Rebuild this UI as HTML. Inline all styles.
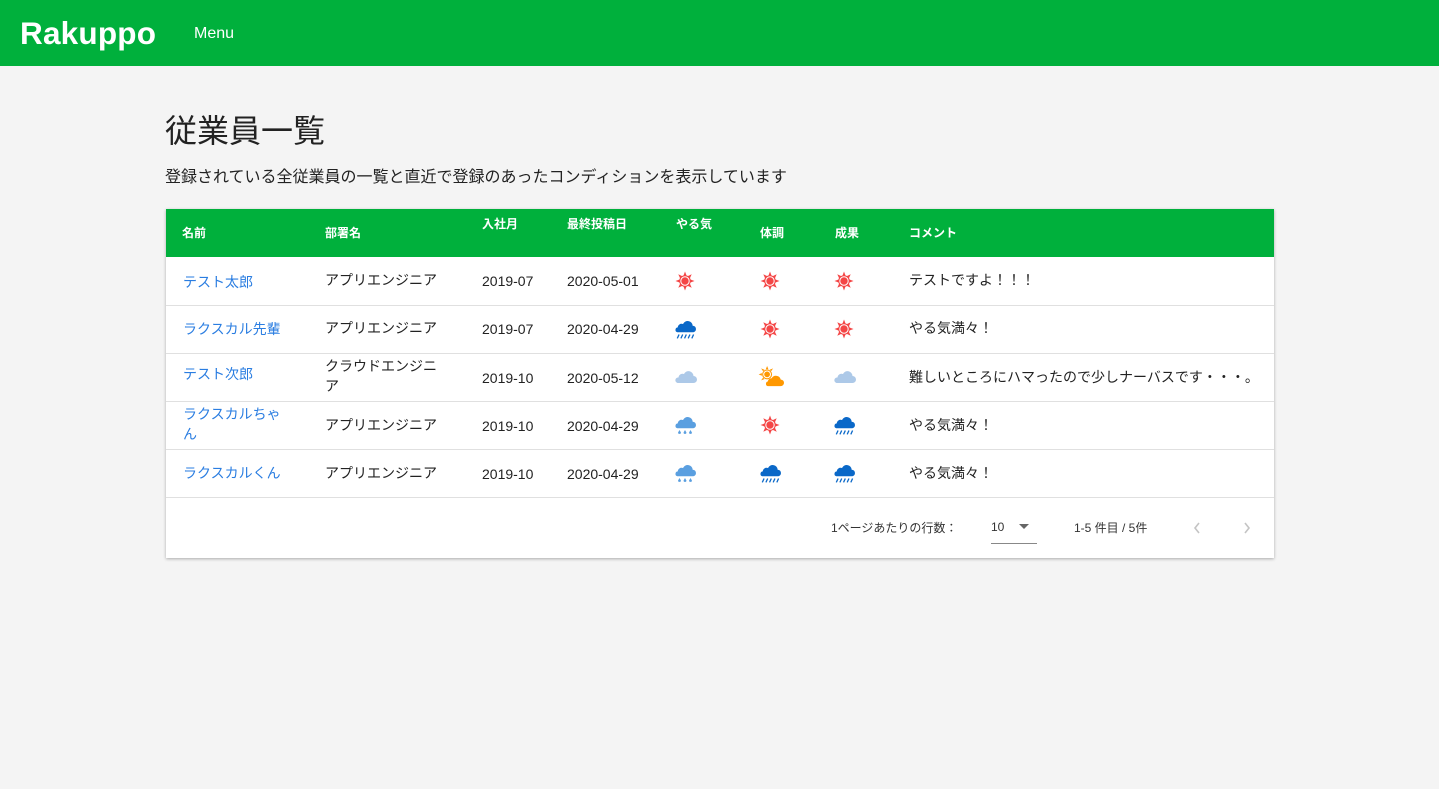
<!DOCTYPE html>
<html><head><meta charset="utf-8">
<style>
*{margin:0;padding:0;box-sizing:border-box}
body{width:1439px;height:789px;background:#f4f4f4;font-family:"Liberation Sans","Noto Sans CJK JP",sans-serif;color:#222;position:relative;overflow:hidden}
.hdr{position:absolute;left:0;top:0;width:1439px;height:66px;background:#00b03c;color:#fff}
.logo{position:absolute;left:20px;top:15px;font-size:31.5px;font-weight:bold;letter-spacing:0.2px}
.menu{position:absolute;left:194px;top:25px;font-size:16px}
h1{position:absolute;left:165px;top:106px;font-size:32px;font-weight:normal;color:#222}
.sub{position:absolute;left:165px;top:163px;font-size:16px;color:#222}
.card{position:absolute;left:166px;top:209px;width:1108px;height:349px;background:#fff;box-shadow:0 1px 3px rgba(0,0,0,.3)}
.th{position:absolute;left:0;top:0;width:1108px;height:48px;background:#00b03c;color:#fff;font-size:12px;font-weight:bold}
.th div{position:absolute}
.row{position:absolute;left:0;width:1108px;height:48px;border-bottom:1px solid #e0e0e0;font-size:14px}
.row div{position:absolute;line-height:20px}
.row svg{position:absolute}
.n{color:#2a7de1}
.ft{position:absolute;top:289px;font-size:12px;color:#333}
</style></head><body>
<svg width="0" height="0" style="position:absolute">
<defs>
<symbol id="sun" viewBox="0 0 20 20"><g fill="#f44646"><polygon points="10,0.5 11.6,4.8 8.4,4.8"/><polygon points="10,19.5 11.6,15.2 8.4,15.2"/><polygon points="0.5,10 4.8,11.6 4.8,8.4"/><polygon points="19.5,10 15.2,11.6 15.2,8.4"/><polygon points="3.3,3.3 7.5,5.2 5.2,7.5"/><polygon points="16.7,16.7 12.5,14.8 14.8,12.5"/><polygon points="16.7,3.3 14.8,7.5 12.5,5.2"/><polygon points="3.3,16.7 5.2,12.5 7.5,14.8"/><circle cx="10" cy="10" r="5.8"/></g><circle cx="10" cy="10" r="4.2" fill="none" stroke="#fff" stroke-width="1"/></symbol>
<symbol id="cloud" viewBox="0 0 24 20"><path d="M3.5 16h16a3.5 3.5 0 0 0 0-7 5 5 0 0 0-9.5-2 4 4 0 0 0-5.5 3.5A2.8 2.8 0 0 0 3.5 16z" fill="#adc9e8"/></symbol>
<symbol id="heavy" viewBox="0 0 20 20"><path d="M3 13h14a3 3 0 0 0 0-6 4.6 4.6 0 0 0-8.8-1.5 3.5 3.5 0 0 0-4.8 3A2.3 2.3 0 0 0 3 13z" fill="#0a68c8"/><g stroke="#0a68c8" stroke-width="1.2"><line x1="3" y1="18.5" x2="4.6" y2="15"/><line x1="6.3" y1="18.5" x2="7.9" y2="15"/><line x1="9.6" y1="18.5" x2="11.2" y2="15"/><line x1="12.9" y1="18.5" x2="14.5" y2="15"/><line x1="16.2" y1="18.5" x2="17.8" y2="15"/></g></symbol>
<symbol id="drops" viewBox="0 0 20 20"><path d="M3 13h14a3 3 0 0 0 0-6 4.6 4.6 0 0 0-8.8-1.5 3.5 3.5 0 0 0-4.8 3A2.3 2.3 0 0 0 3 13z" fill="#5a9fe0"/><g fill="#5a9fe0"><path d="M5 14.5l1.3 2.3a1.3 1.3 0 1 1-2.6 0z"/><path d="M10 14.5l1.3 2.3a1.3 1.3 0 1 1-2.6 0z"/><path d="M15 14.5l1.3 2.3a1.3 1.3 0 1 1-2.6 0z"/></g></symbol>
<symbol id="suncl" viewBox="0 0 20 20"><g fill="#ff9800"><circle cx="7" cy="8" r="3.8"/><polygon points="7,1.5 8,4 6,4"/><polygon points="0.5,8 3,9 3,7"/><polygon points="2.4,3.4 5,4.4 3.9,5.6"/><polygon points="11.6,3.4 9,4.4 10.1,5.6"/><polygon points="2.4,12.6 3.9,10.4 5,11.6"/><path d="M7.5 17h10a2.5 2.5 0 0 0 0-5 3.8 3.8 0 0 0-7-1 2.8 2.8 0 0 0-3 2.5A1.8 1.8 0 0 0 7.5 17z"/></g><circle cx="7" cy="8" r="2.6" fill="none" stroke="#fff" stroke-width=".8"/></symbol>
</defs></svg>
<div class="hdr"><div class="logo">Rakuppo</div><div class="menu">Menu</div></div>
<h1>従業員一覧</h1>
<div class="sub">登録されている全従業員の一覧と直近で登録のあったコンディションを表示しています</div>
<div class="card">
<div class="th">
<div style="left:16px;top:15px">名前</div>
<div style="left:159px;top:15px">部署名</div>
<div style="left:316px;top:6px">入社月</div>
<div style="left:401px;top:6px">最終投稿日</div>
<div style="left:510px;top:6px">やる気</div>
<div style="left:594px;top:15px">体調</div>
<div style="left:669px;top:15px">成果</div>
<div style="left:743px;top:15px">コメント</div>
</div>
<div class="row" style="top:48px;height:49px">
<div class="n" style="left:17px;top:15px">テスト太郎</div><div style="left:159px;top:13px">アプリエンジニア</div><div style="left:316px;top:14px">2019-07</div><div style="left:401px;top:14px">2020-05-01</div>
<svg width="20" height="20" viewBox="0 0 20 20" style="left:509px;top:14px"><use href="#sun" width="20" height="20"/></svg><svg width="20" height="20" viewBox="0 0 20 20" style="left:594px;top:14px"><use href="#sun" width="20" height="20"/></svg><svg width="20" height="20" viewBox="0 0 20 20" style="left:668px;top:14px"><use href="#sun" width="20" height="20"/></svg>
<div style="left:743px;top:13px">テストですよ！！！</div></div>
<div class="row" style="top:97px">
<div class="n" style="left:17px;top:13px">ラクスカル先輩</div><div style="left:159px;top:12px">アプリエンジニア</div><div style="left:316px;top:13px">2019-07</div><div style="left:401px;top:13px">2020-04-29</div>
<svg width="22" height="22" viewBox="0 0 20 20" style="left:508px;top:12px"><use href="#heavy" width="20" height="20"/></svg><svg width="20" height="20" viewBox="0 0 20 20" style="left:594px;top:13px"><use href="#sun" width="20" height="20"/></svg><svg width="20" height="20" viewBox="0 0 20 20" style="left:668px;top:13px"><use href="#sun" width="20" height="20"/></svg>
<div style="left:743px;top:12px">やる気満々！</div></div>
<div class="row" style="top:145px">
<div class="n" style="left:17px;top:10px">テスト次郎</div><div style="left:159px;top:2px;width:118px">クラウドエンジニア</div><div style="left:316px;top:14px">2019-10</div><div style="left:401px;top:14px">2020-05-12</div>
<svg width="24" height="20" viewBox="0 0 24 20" style="left:508px;top:13px"><use href="#cloud" width="24" height="20"/></svg><svg width="26" height="26" viewBox="0 0 20 20" style="left:592px;top:10px"><use href="#suncl" width="20" height="20"/></svg><svg width="24" height="20" viewBox="0 0 24 20" style="left:667px;top:13px"><use href="#cloud" width="24" height="20"/></svg>
<div style="left:743px;top:13px">難しいところにハマったので少しナーバスです・・・。</div></div>
<div class="row" style="top:193px">
<div class="n" style="left:17px;top:2px;width:104px">ラクスカルちゃん</div><div style="left:159px;top:13px">アプリエンジニア</div><div style="left:316px;top:14px">2019-10</div><div style="left:401px;top:14px">2020-04-29</div>
<svg width="22" height="22" viewBox="0 0 20 20" style="left:508px;top:12px"><use href="#drops" width="20" height="20"/></svg><svg width="20" height="20" viewBox="0 0 20 20" style="left:594px;top:13px"><use href="#sun" width="20" height="20"/></svg><svg width="22" height="22" viewBox="0 0 20 20" style="left:667px;top:12px"><use href="#heavy" width="20" height="20"/></svg>
<div style="left:743px;top:13px">やる気満々！</div></div>
<div class="row" style="top:241px">
<div class="n" style="left:17px;top:13px">ラクスカルくん</div><div style="left:159px;top:13px">アプリエンジニア</div><div style="left:316px;top:14px">2019-10</div><div style="left:401px;top:14px">2020-04-29</div>
<svg width="22" height="22" viewBox="0 0 20 20" style="left:508px;top:12px"><use href="#drops" width="20" height="20"/></svg><svg width="22" height="22" viewBox="0 0 20 20" style="left:593px;top:12px"><use href="#heavy" width="20" height="20"/></svg><svg width="22" height="22" viewBox="0 0 20 20" style="left:667px;top:12px"><use href="#heavy" width="20" height="20"/></svg>
<div style="left:743px;top:13px">やる気満々！</div></div>
<div class="ft" style="left:665px;top:310px">1ページあたりの行数：</div>
<div class="ft" style="left:825px;top:311px">10</div>
<svg style="position:absolute;left:852px;top:315px" width="12" height="6"><path d="M1 0h10L6 5z" fill="#666"/></svg>
<div style="position:absolute;left:825px;top:334px;width:46px;height:1px;background:#888"></div>
<div class="ft" style="left:908px;top:310px">1-5 件目 / 5件</div>
<svg style="position:absolute;left:1026px;top:312px" width="10" height="14"><path d="M7 2L3 7l4 5" stroke="#c4c4c4" stroke-width="1.6" fill="none"/></svg>
<svg style="position:absolute;left:1076px;top:312px" width="10" height="14"><path d="M3 2l4 5-4 5" stroke="#c4c4c4" stroke-width="1.6" fill="none"/></svg>
</div>
</body></html>
